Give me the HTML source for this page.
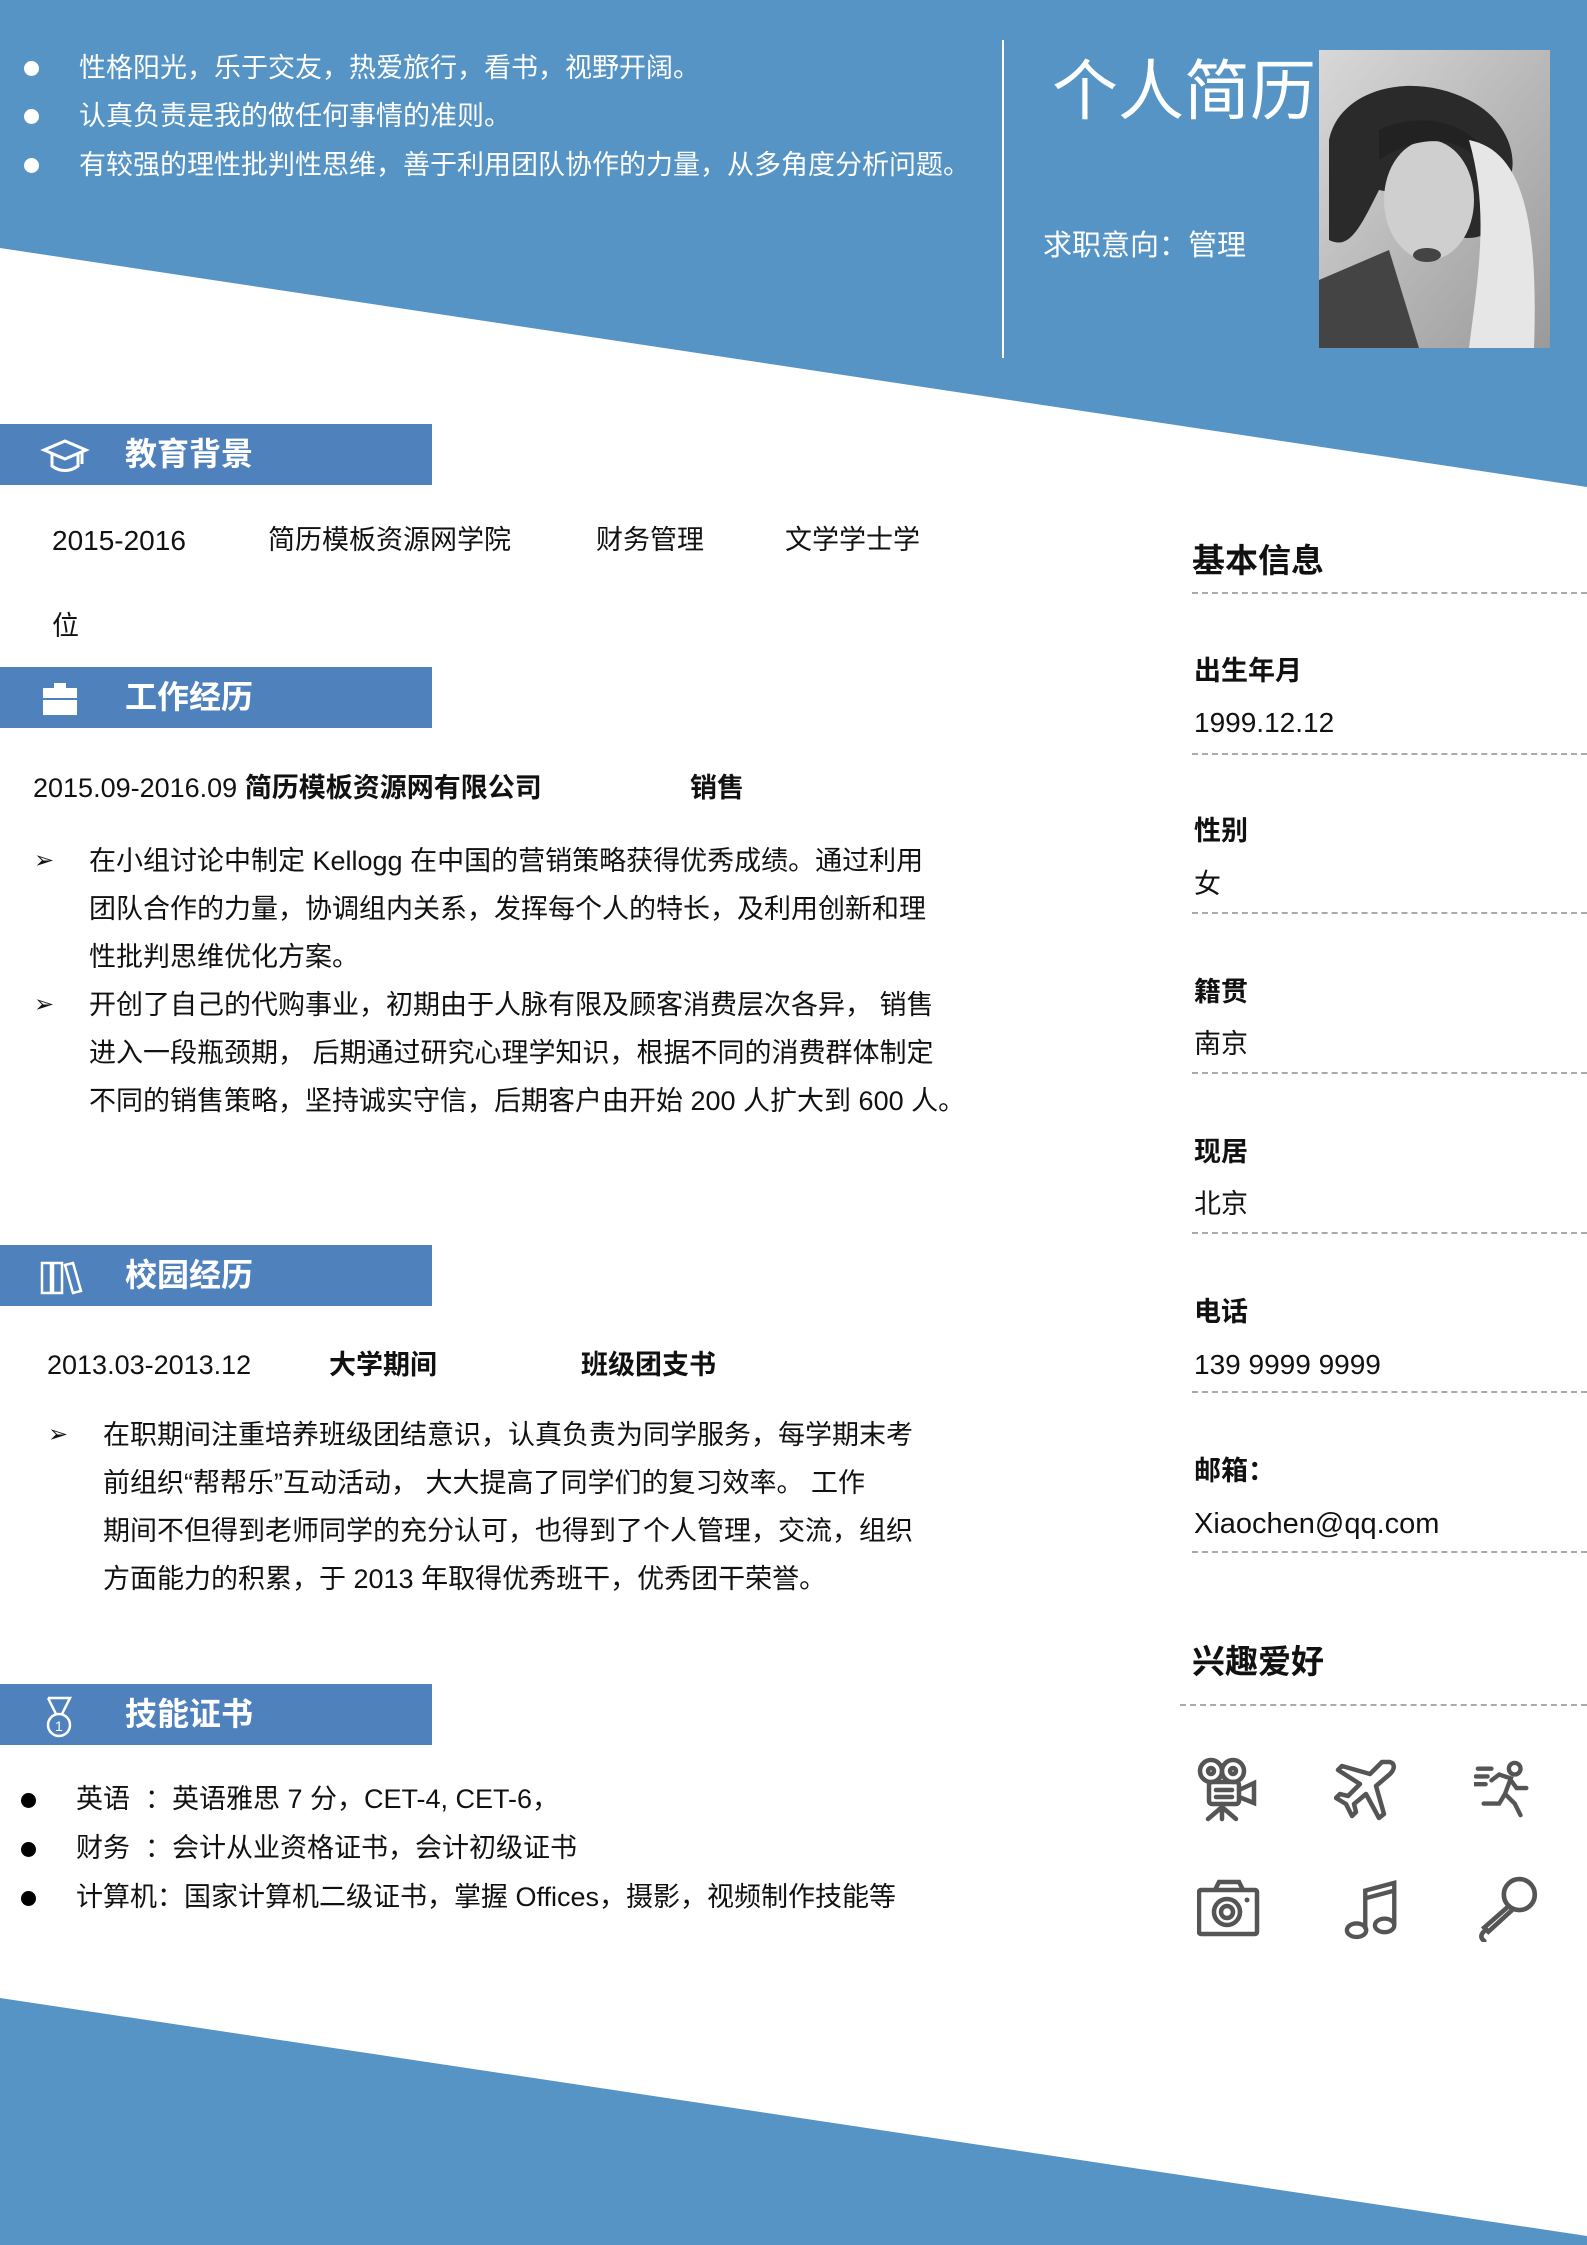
<!DOCTYPE html>
<html><head><meta charset="utf-8">
<style>
*{margin:0;padding:0;box-sizing:border-box}
body{width:1587px;height:2245px;position:relative;overflow:hidden;background:#fff;font-family:"Liberation Sans","Noto Sans CJK SC",sans-serif;color:#111}
.a{position:absolute;white-space:nowrap;line-height:1}
.t{font-size:27px}
.w{color:#fff}
.b{font-weight:bold}
.dot{position:absolute;width:15px;height:15px;border-radius:50%}
.bar{position:absolute;left:0;width:432px;height:61px;background:#4f81bd}
.bar .lbl{position:absolute;left:125px;top:14px;font-size:32px;font-weight:bold;color:#fff;line-height:1}
.bar svg{position:absolute;left:40px;top:12px}
.dash{position:absolute;height:0;border-top:2px dashed #aaa}
.lines div{height:48px;line-height:48px;font-size:27px;white-space:nowrap}
</style></head><body>
<svg style="position:absolute;left:0;top:0" width="1587" height="2245">
<polygon points="0,0 1587,0 1587,487 0,248" fill="#5594c5"/>
<polygon points="0,1998 1587,2236 1587,2245 0,2245" fill="#5594c5"/>
<line x1="1003" y1="40" x2="1003" y2="358" stroke="#fff" stroke-width="2"/>
</svg>

<!-- top bullets -->
<div class="dot" style="left:24px;top:61px;background:#fff"></div>
<div class="a w t" style="left:79px;top:55px">性格阳光，乐于交友，热爱旅行，看书，视野开阔。</div>
<div class="dot" style="left:24px;top:109px;background:#fff"></div>
<div class="a w t" style="left:79px;top:103px">认真负责是我的做任何事情的准则。</div>
<div class="dot" style="left:24px;top:158px;background:#fff"></div>
<div class="a w t" style="left:79px;top:152px">有较强的理性批判性思维，善于利用团队协作的力量，从多角度分析问题。</div>

<div class="a w" style="left:1052px;top:58px;font-size:66px">个人简历</div>
<div class="a w" style="left:1043px;top:232px;font-size:29px">求职意向：管理</div>

<!-- photo -->
<svg style="position:absolute;left:1319px;top:50px" width="231" height="298">
<defs><linearGradient id="g" x1="0" y1="0" x2="1" y2="1"><stop offset="0" stop-color="#d8d8d8"/><stop offset="1" stop-color="#9a9a9a"/></linearGradient></defs>
<rect width="231" height="298" fill="url(#g)"/>
<path d="M10 90 C20 40 90 20 150 50 C190 70 200 110 190 130 L175 180 C140 200 120 180 110 150 L60 140 C40 180 30 200 10 190Z" fill="#2a2a2a"/>
<ellipse cx="110" cy="150" rx="45" ry="60" fill="#cfcfcf"/>
<path d="M60 80 C100 60 160 70 175 120 L160 110 C130 80 90 90 60 110Z" fill="#222"/>
<path d="M150 90 C200 100 220 160 215 298 L150 298 C160 220 170 160 150 90Z" fill="#e6e6e6"/>
<path d="M0 230 L70 200 L100 298 L0 298Z" fill="#444"/>
<ellipse cx="108" cy="205" rx="14" ry="7" fill="#444"/>
</svg>

<!-- 教育背景 -->
<div class="bar" style="top:424px">
<svg width="50" height="40" viewBox="0 0 50 40"><path d="M4 14 L25 5 L46 14 L25 23Z M12 18 V30 C20 36 30 36 38 30 V18 M42 16 V28" fill="none" stroke="#fff" stroke-width="3"/></svg>
<div class="lbl">教育背景</div></div>
<div class="a" style="left:52px;top:527px;font-size:28px">2015-2016</div>
<div class="a t" style="left:268px;top:527px">简历模板资源网学院</div>
<div class="a t" style="left:596px;top:527px">财务管理</div>
<div class="a t" style="left:785px;top:527px">文学学士学</div>
<div class="a t" style="left:52px;top:613px">位</div>

<!-- 工作经历 -->
<div class="bar" style="top:667px">
<svg width="40" height="40" viewBox="0 0 40 40"><rect x="14" y="4" width="12" height="5" fill="#fff"/><rect x="3" y="9" width="34" height="10" fill="#fff"/><rect x="3" y="21" width="34" height="15" fill="#fff"/></svg>
<div class="lbl">工作经历</div></div>
<div class="a t" style="left:33px;top:775px">2015.09-2016.09 <b>简历模板资源网有限公司</b></div>
<div class="a t b" style="left:690px;top:775px">销售</div>
<div class="a" style="left:34px;top:849px;font-size:24px">➢</div>
<div class="a" style="left:34px;top:993px;font-size:24px">➢</div>
<div class="a lines" style="left:89px;top:837px">
<div>在小组讨论中制定 Kellogg 在中国的营销策略获得优秀成绩。通过利用</div>
<div>团队合作的力量，协调组内关系，发挥每个人的特长，及利用创新和理</div>
<div>性批判思维优化方案。</div>
<div>开创了自己的代购事业，初期由于人脉有限及顾客消费层次各异， 销售</div>
<div>进入一段瓶颈期， 后期通过研究心理学知识，根据不同的消费群体制定</div>
<div>不同的销售策略，坚持诚实守信，后期客户由开始 200 人扩大到 600 人。</div>
</div>

<!-- 校园经历 -->
<div class="bar" style="top:1245px">
<svg width="44" height="40" viewBox="0 0 44 40"><g fill="none" stroke="#fff" stroke-width="2.5"><rect x="2" y="6" width="9" height="30"/><rect x="13" y="6" width="9" height="30"/><path d="M25 8 L33 6 L41 34 L33 36Z"/></g></svg>
<div class="lbl">校园经历</div></div>
<div class="a t" style="left:47px;top:1352px">2013.03-2013.12</div>
<div class="a t b" style="left:329px;top:1352px">大学期间</div>
<div class="a t b" style="left:581px;top:1352px">班级团支书</div>
<div class="a" style="left:48px;top:1423px;font-size:24px">➢</div>
<div class="a lines" style="left:103px;top:1411px">
<div>在职期间注重培养班级团结意识，认真负责为同学服务，每学期末考</div>
<div>前组织“帮帮乐”互动活动， 大大提高了同学们的复习效率。 工作</div>
<div>期间不但得到老师同学的充分认可，也得到了个人管理，交流，组织</div>
<div>方面能力的积累，于 2013 年取得优秀班干，优秀团干荣誉。</div>
</div>

<!-- 技能证书 -->
<div class="bar" style="top:1684px">
<svg width="40" height="44" viewBox="0 0 40 44"><g fill="none" stroke="#fff" stroke-width="2.5"><path d="M8 2 H30 L22 18 M16 18 L8 2"/><circle cx="19" cy="29" r="11"/></g><text x="15" y="35" font-size="14" fill="#fff" font-family="Liberation Sans">1</text></svg>
<div class="lbl">技能证书</div></div>
<div class="dot" style="left:21px;top:1793px;background:#000"></div>
<div class="a t" style="left:76px;top:1786px">英语 &nbsp;：英语雅思 7 分，CET-4, CET-6，</div>
<div class="dot" style="left:21px;top:1842px;background:#000"></div>
<div class="a t" style="left:76px;top:1835px">财务 &nbsp;：会计从业资格证书，会计初级证书</div>
<div class="dot" style="left:21px;top:1891px;background:#000"></div>
<div class="a t" style="left:76px;top:1884px">计算机：国家计算机二级证书，掌握 Offices，摄影，视频制作技能等</div>

<!-- right column -->
<div class="a b" style="left:1192px;top:544px;font-size:33px">基本信息</div>
<div class="dash" style="left:1192px;width:395px;top:592px"></div>

<div class="a b t" style="left:1194px;top:658px">出生年月</div>
<div class="a" style="left:1194px;top:709px;font-size:28px">1999.12.12</div>
<div class="dash" style="left:1192px;width:395px;top:753px"></div>

<div class="a b t" style="left:1194px;top:818px">性别</div>
<div class="a t" style="left:1194px;top:871px">女</div>
<div class="dash" style="left:1192px;width:395px;top:912px"></div>

<div class="a b t" style="left:1194px;top:979px">籍贯</div>
<div class="a t" style="left:1194px;top:1031px">南京</div>
<div class="dash" style="left:1192px;width:395px;top:1072px"></div>

<div class="a b t" style="left:1194px;top:1139px">现居</div>
<div class="a t" style="left:1194px;top:1191px">北京</div>
<div class="dash" style="left:1192px;width:395px;top:1232px"></div>

<div class="a b t" style="left:1194px;top:1299px">电话</div>
<div class="a" style="left:1194px;top:1351px;font-size:28px">139 9999 9999</div>
<div class="dash" style="left:1192px;width:395px;top:1391px"></div>

<div class="a b t" style="left:1194px;top:1458px">邮箱：</div>
<div class="a" style="left:1194px;top:1510px;font-size:29px">Xiaochen@qq.com</div>
<div class="dash" style="left:1192px;width:395px;top:1551px"></div>

<div class="a b" style="left:1192px;top:1645px;font-size:33px">兴趣爱好</div>
<div class="dash" style="left:1180px;width:407px;top:1704px"></div>

<!-- icons -->
<svg style="position:absolute;left:1196px;top:1757px" width="64" height="66" viewBox="0 0 64 66"><g fill="none" stroke="#555" stroke-width="4.5" stroke-linecap="round"><circle cx="15" cy="14" r="11"/><circle cx="37" cy="14" r="11"/><circle cx="15" cy="14" r="3"/><circle cx="37" cy="14" r="3"/><rect x="13" y="25" width="30" height="22" rx="3"/><path d="M20 33 H36 M20 40 H36 M43 33 L58 26 V46 L43 40 M26 47 V62 M26 50 L12 62 M26 50 L40 62"/></g></svg>
<svg style="position:absolute;left:1334px;top:1758px" width="64" height="64" viewBox="0 0 64 64"><path d="M56 4 C62 6 60 12 56 16 L42 28 L50 56 L45 60 L32 36 L20 46 L22 54 L18 58 L12 46 L2 40 L6 36 L14 38 L26 26 L4 12 L8 8 L36 16 L48 4Z" fill="none" stroke="#555" stroke-width="4.5" stroke-linejoin="round"/></svg>
<svg style="position:absolute;left:1474px;top:1758px" width="62" height="64" viewBox="0 0 64 64"><g fill="none" stroke="#555" stroke-width="4.5" stroke-linecap="round"><circle cx="42" cy="10" r="6"/><path d="M18 22 L26 16 L38 20 L32 36 L42 46 L48 58 M38 22 L44 30 L54 30 M32 36 L26 46 L10 46 M4 10 H18 M2 18 H14 M0 26 H12"/></g></svg>
<svg style="position:absolute;left:1197px;top:1876px" width="64" height="62" viewBox="0 0 64 62"><g fill="none" stroke="#555" stroke-width="4.5"><rect x="2" y="14" width="58" height="44" rx="2"/><path d="M18 14 L22 6 H42 L46 14"/><circle cx="30" cy="36" r="13"/><circle cx="30" cy="36" r="6"/></g><circle cx="50" cy="24" r="2.5" fill="#555"/></g></svg>
<svg style="position:absolute;left:1344px;top:1876px" width="58" height="64" viewBox="0 0 60 64"><g fill="none" stroke="#555" stroke-width="4.5"><path d="M22 54 V14 L52 6 V50 M22 22 L52 14"/><ellipse cx="13" cy="55" rx="10" ry="7"/><ellipse cx="42" cy="50" rx="10" ry="7"/></g></svg>
<svg style="position:absolute;left:1476px;top:1876px" width="66" height="66" viewBox="0 0 64 64"><g fill="none" stroke="#555" stroke-width="4.5" stroke-linecap="round"><circle cx="42" cy="18" r="15"/><path d="M32 29 L8 50 L12 54 L35 33 M10 52 C4 56 4 60 8 63"/></g></svg>
</body></html>
